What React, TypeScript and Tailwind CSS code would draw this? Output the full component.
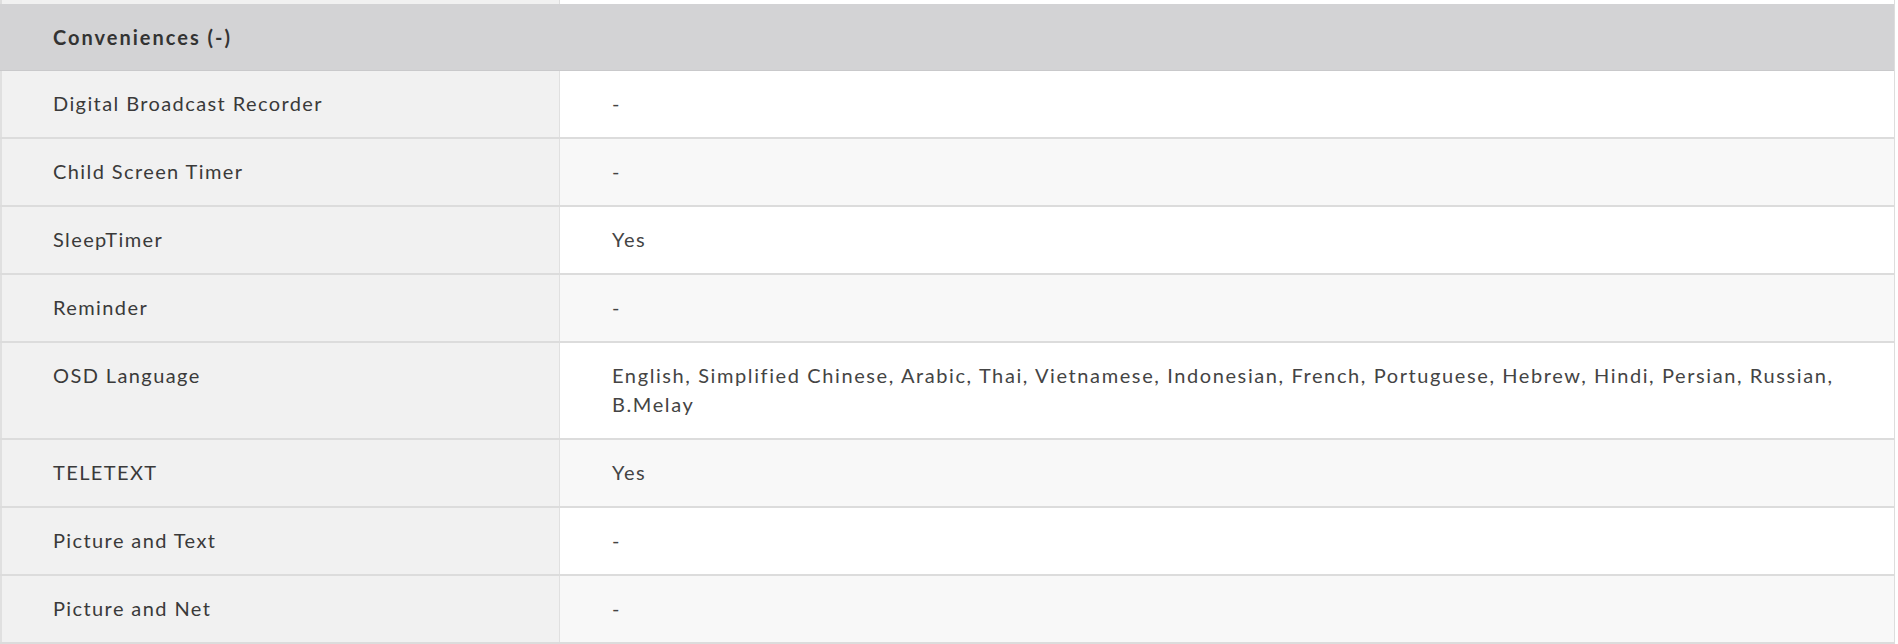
import React from "react";

const rows = [
  { label: "Digital Broadcast Recorder", value: "-" },
  { label: "Child Screen Timer", value: "-" },
  { label: "SleepTimer", value: "Yes" },
  { label: "Reminder", value: "-" },
  {
    label: "OSD Language",
    value:
      "English, Simplified Chinese, Arabic, Thai, Vietnamese, Indonesian, French, Portuguese, Hebrew, Hindi, Persian, Russian, B.Melay",
  },
  { label: "TELETEXT", value: "Yes" },
  { label: "Picture and Text", value: "-" },
  { label: "Picture and Net", value: "-" },
];

const App = () => {
  return (
    <div className="w-[1898px] h-[644px] bg-white overflow-hidden font-['Lato',sans-serif]">
      <div className="w-[1895px] border-r border-[#dddddd]">
        {/* tail of the previous row */}
        <div className="flex h-[4px]">
          <div className="w-[560px] shrink-0 bg-[#f1f1f1] border-l-2 border-r border-[#dedede]" />
          <div className="flex-1 bg-white" />
        </div>

        <div className="h-[67px] flex items-center bg-[#d3d3d5] border-b border-[#c9c9cb] pl-[53px]">
          <span className="text-[20px] font-bold tracking-[0.1em] text-[#333333]">
            Conveniences (-)
          </span>
        </div>

        {rows.map((row, idx) => (
          <div key={idx} className="flex border-b-2 border-[#dcdcdc]">
            <div className="w-[560px] shrink-0 bg-[#f1f1f1] border-l-2 border-r border-[#e0e0e0] pl-[51px] pt-[18px] pb-[19px] text-[20px] leading-[29px] tracking-[0.07em] text-[#3a3a3a]">
              {row.label}
            </div>
            <div
              className={
                "flex-1 pl-[52px] pr-[60px] pt-[18px] pb-[19px] text-[20px] leading-[29px] tracking-[0.08em] text-[#444444] " +
                (idx % 2 === 0 ? "bg-white" : "bg-[#f8f8f8]")
              }
            >
              {row.value}
            </div>
          </div>
        ))}
      </div>
    </div>
  );
};

export default App;
